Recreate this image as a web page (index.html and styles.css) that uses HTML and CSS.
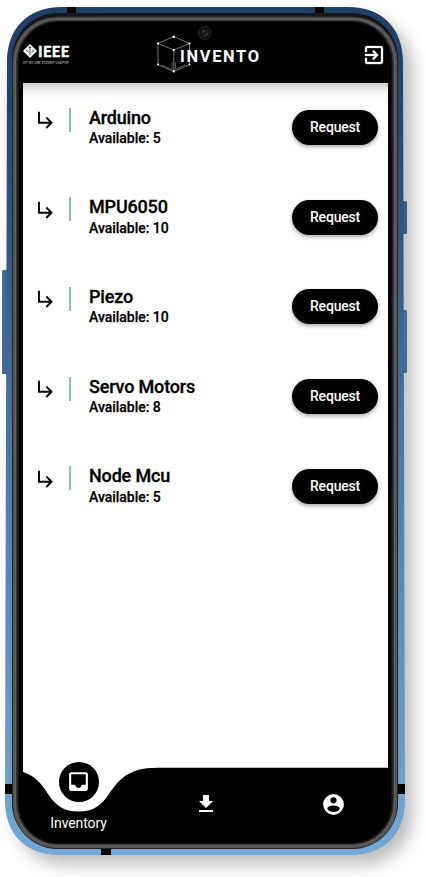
FILE: index.html
```html
<!DOCTYPE html>
<html lang="en">
<head>
<meta charset="utf-8">
<title>Invento</title>
<link rel="stylesheet" href="styles.css">
</head>
<body>
<svg class="defs" width="0" height="0" aria-hidden="true">
  <symbol id="arrow" viewBox="0 0 18 20"><path d="M2 .8V11.700H14.500M9.300 6.500L14.500 11.700L9.300 17" fill="none" stroke="#000" stroke-width="1.900"/></symbol>
</svg>
<div class="phone">
  <svg class="frame" viewBox="0 0 426 877" aria-hidden="true">
    <defs>
      <linearGradient id="blue" x1="0" y1="0" x2="0" y2="1">
        <stop offset="0" stop-color="#203f66"/><stop offset=".12" stop-color="#24466e"/><stop offset=".35" stop-color="#3a618c"/><stop offset=".65" stop-color="#5588b6"/><stop offset="1" stop-color="#73a9d4"/>
      </linearGradient>
      <filter id="soft" x="-20%" y="-10%" width="140%" height="120%"><feGaussianBlur stdDeviation="8"/></filter>
    </defs>
    <rect x="14" y="18" width="399" height="847" rx="50" fill="#000" opacity=".25" filter="url(#soft)"/>
    <rect x="2" y="270" width="7" height="104" rx="1.500" fill="#44699a"/>
    <rect x="401" y="201" width="6" height="33" rx="1.500" fill="#365d88"/>
    <rect x="401" y="310" width="6" height="63" rx="1.500" fill="#426b99"/>
    <path d="M62 7H348C383 7 403 29 403 62L405 800C405 834 385 855 350 855H60C25 855 5 834 5 800L7 62C7 29 27 7 62 7Z" fill="url(#blue)"/>
    <path d="M67 7h9v8h-9zM315 7h9v8h-9zM5 784h9v10H5zM396 784h9v10h-9zM101 847h10v8h-10z" fill="#050506"/>
    <rect x="12" y="13" width="386" height="836" rx="46" fill="#161617"/>
    <rect x="12.500" y="16.500" width="385" height="832" rx="45" fill="#303030"/>
    <rect x="13" y="17.500" width="384" height="830.500" rx="44" fill="#555"/>
    <rect x="15" y="19" width="380" height="827" rx="43" fill="#626262"/>
    <rect x="16" y="20" width="378" height="825" rx="42" fill="#333"/>
    <rect x="17.500" y="21" width="375" height="823" rx="41" fill="#111"/>
    <rect x="19" y="22" width="372" height="821" rx="40" fill="#000"/>
    <path d="M102 16H308" stroke="#333" stroke-width="1" stroke-dasharray="1.500 1.500"/>
    <circle cx="205" cy="33" r="6.500" fill="#101010" stroke="#252525"/>
    <circle cx="205" cy="33" r="4" fill="#1a1a1a"/>
    <circle cx="203.500" cy="31.300" r="1" fill="#555"/>
    <path d="M204.500 35.500Q207.500 35.500 208 32.500" fill="none" stroke="#383838" stroke-width="1.300"/>
  </svg>
  <div class="screen">
    <header class="header">
      <div class="ieee">
        <div class="ieee-mark">
          <svg width="14" height="14" viewBox="0 0 14 14"><path d="M7 0L14 7L7 14L0 7Z" fill="#fff"/><path d="M7 2.500V11.500M5.800 4L7 2.500L8.200 4M4 5.500Q2.500 7 5.500 8.200M10 5.500Q11.500 7 8.500 8.200" fill="none" stroke="#000" stroke-width=".7"/></svg>
          <span>IEEE</span>
        </div>
        <div class="chapter">VIT VELLORE STUDENT CHAPTER</div>
      </div>
      <div class="brand">
        <svg width="36" height="38" viewBox="0 0 36 38">
          <g fill="none" stroke="#aaa" stroke-width=".7"><path d="M2 8.500L17.800 1.500L33.500 8.500V29.500L17.800 36.500L2 29.500ZM2 8.500L17.800 15L33.500 8.500M17.800 15V36.500"/><path d="M6 30L16 34.500V27M29 30L19.500 34.500V27" stroke="#777"/></g>
          <g fill="#fff"><circle cx="2" cy="8.500" r="1.100"/><circle cx="17.800" cy="1.700" r="1.200"/><circle cx="33.500" cy="8.500" r="1.100"/><circle cx="17.800" cy="15" r="1.200"/><circle cx="2" cy="29.500" r="1"/><circle cx="33.500" cy="29.500" r="1"/><circle cx="17.800" cy="36.300" r="1.200"/></g>
        </svg>
        <span>INVENTO</span>
      </div>
      <svg class="exit" width="24" height="24" viewBox="0 0 24 24"><path fill="#fff" stroke="#fff" stroke-width=".3" d="M10.090 15.590L11.500 17l5-5-5-5-1.410 1.410L12.670 11H3v2h9.670l-2.580 2.590zM19 3H5c-1.110 0-2 .9-2 2v4h2V5h14v14H5v-4H3v4c0 1.100.89 2 2 2h14c1.100 0 2-.9 2-2V5c0-1.100-.9-2-2-2z"/></svg>
    </header>
    <main class="list">
      <section class="item"><svg class="arrow"><use href="#arrow"/></svg><i class="rule"></i><div class="info"><h2>Arduino</h2><p>Available: 5</p></div><button>Request</button></section>
      <section class="item"><svg class="arrow"><use href="#arrow"/></svg><i class="rule"></i><div class="info"><h2>MPU6050</h2><p>Available: 10</p></div><button>Request</button></section>
      <section class="item"><svg class="arrow"><use href="#arrow"/></svg><i class="rule"></i><div class="info"><h2>Piezo</h2><p>Available: 10</p></div><button>Request</button></section>
      <section class="item"><svg class="arrow"><use href="#arrow"/></svg><i class="rule"></i><div class="info"><h2>Servo Motors</h2><p>Available: 8</p></div><button>Request</button></section>
      <section class="item"><svg class="arrow"><use href="#arrow"/></svg><i class="rule"></i><div class="info"><h2>Node Mcu</h2><p>Available: 5</p></div><button>Request</button></section>
    </main>
    <nav class="nav">
      <svg class="wave" viewBox="23 762 365 60"><path d="M23 772C35 776 41 783 48 794C56 806 64 811.500 78.500 811.500C93 811.500 101 806 109 794C118 781 127 767.700 157 767.700H388V822H23Z"/></svg>
      <a class="tab active">
        <span class="bubble"><svg width="25" height="25" viewBox="0 0 24 24"><path fill="#fff" d="M19 3H4.990c-1.110 0-1.980.89-1.980 2L3 19c0 1.100.88 2 1.990 2H19c1.100 0 2-.9 2-2V5c0-1.110-.9-2-2-2zm0 12h-4c0 1.660-1.350 3-3 3s-3-1.340-3-3H4.990V5H19v10z"/></svg></span>
        <span class="label">Inventory</span>
      </a>
      <a class="tab"><svg width="24" height="24" viewBox="0 0 24 24"><path fill="#fff" d="M19 9h-4V3H9v6H5l7 7 7-7zM5 18v2h14v-2H5z"/></svg></a>
      <a class="tab account"><svg width="25" height="25" viewBox="0 0 24 24"><path fill="#fff" fill-rule="evenodd" d="M12 2a10 10 0 1 0 0 20a10 10 0 1 0 0-20zm0 3a3 3 0 1 1 0 6a3 3 0 1 1 0-6zm0 14.200c-2.500 0-4.710-1.280-6-3.220.03-1.990 4-3.080 6-3.080s5.970 1.090 6 3.080c-1.290 1.940-3.500 3.220-6 3.220z"/></svg></a>
    </nav>
  </div>
</div>
</body>
</html>
```
FILE: styles.css
```css
* { box-sizing: border-box; }
body { margin: 0; background: #fff; font-family: Roboto, "Liberation Sans", sans-serif; }
.defs { position: absolute; }
.phone { position: relative; width: 426px; height: 877px; padding: 22px 38px 34px 23px; overflow: hidden; }
.frame { position: absolute; inset: 0; width: 426px; height: 877px; }
.screen { position: relative; display: flex; flex-direction: column; height: 821px; }
.header { display: flex; align-items: flex-start; height: 60.500px; flex: none; color: #fff; }
.ieee { width: 50px; padding-top: 22px; }
.ieee-mark { display: flex; align-items: center; height: 14px; gap: 1px; }
.ieee-mark span { font: 900 15px/14px Lato, sans-serif; letter-spacing: .35px; -webkit-text-stroke: .3px #fff; }
.chapter { margin-top: 4px; font-size: 2.600px; line-height: 4px; font-weight: 500; letter-spacing: .23px; white-space: nowrap; color: #bbb; }
.brand { display: flex; align-items: center; height: 38px; margin: 13px 0 0 83px; }
.brand span { margin: 5px 0 0 -12px; font: 700 16.400px/20px Roboto, sans-serif; letter-spacing: 1.700px; }
.exit { margin: 21px 2px 0 auto; }
.list { flex: 1; padding-top: 20px; background: linear-gradient(#ccc, #f0f0f0 8px, #fff 16px); }
.item { display: flex; align-items: flex-start; height: 89.700px; padding: 0 10px 0 14px; }
.arrow { width: 18px; height: 20px; margin-top: 8.500px; }
.rule { width: 2px; height: 24px; margin: 5px 18px 0 14px; background: #87bddb; }
.info { flex: 1; padding-top: 5px; }
h2 { margin: 0; font-size: 18px; line-height: 20px; font-weight: 500; letter-spacing: -.17px; -webkit-text-stroke: .3px #000; }
p { margin: 2.500px 0 0; font-size: 14px; line-height: 16px; font-weight: 500; letter-spacing: -.03px; -webkit-text-stroke: .25px #000; }
button { width: 86px; height: 35px; margin-top: 7.500px; padding: 0; border: 0; border-radius: 18px; background: #000; color: #fff; font: 500 14px/35px Roboto, sans-serif; letter-spacing: -.2px; box-shadow: 0 2px 4px rgba(0,0,0,.35); }
.nav { position: relative; display: grid; grid-template-columns: 111px 144px 110px; height: 81px; flex: none; border-radius: 0 0 38px 38px; background: linear-gradient(#fff 50px, #000 50px); }
.wave { position: absolute; top: 0; left: 0; width: 365px; height: 60px; }
.tab { position: relative; display: flex; flex-direction: column; align-items: center; padding-top: 30px; }
.active { padding-top: 0; }
.account { padding-left: 1px; }
.bubble { display: grid; place-items: center; width: 40px; height: 40px; margin-top: -.5px; border-radius: 50%; background: #000; }
.label { margin-top: 13px; color: #fff; font-size: 14px; line-height: 16px; letter-spacing: -.1px; }
```
